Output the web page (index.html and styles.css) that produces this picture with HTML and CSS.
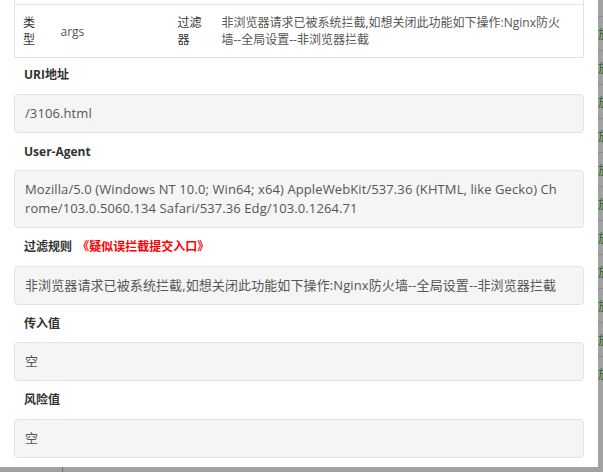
FILE: index.html
```html
<!DOCTYPE html>
<html lang="zh-CN">
<head>
<meta charset="utf-8">
<title>拦截详情</title>
<link rel="stylesheet" href="styles.css">
</head>
<body>
<div class="page">
  <table class="bg-table">
    <tr><td class="bg-main"></td><td class="bg-op">放行</td></tr>
    <tr><td class="bg-main"></td><td class="bg-op">放行</td></tr>
    <tr><td class="bg-main"></td><td class="bg-op">放行</td></tr>
    <tr><td class="bg-main"></td><td class="bg-op">放行</td></tr>
    <tr><td class="bg-main"></td><td class="bg-op">放行</td></tr>
    <tr><td class="bg-main"></td><td class="bg-op">放行</td></tr>
    <tr><td class="bg-main"></td><td class="bg-op">放行</td></tr>
    <tr><td class="bg-main"></td><td class="bg-op">放行</td></tr>
    <tr><td class="bg-main"></td><td class="bg-op">放行</td></tr>
    <tr><td class="bg-main"></td><td class="bg-op">放行</td></tr>
    <tr><td class="bg-main"></td><td class="bg-op">放行</td></tr>
  </table>
  <div class="bg-foot"><div class="bg-foot-cell"></div><div class="bg-foot-rest"></div></div>
</div>
<div class="overlay"></div>
<div class="modal">
  <div class="modal-body">
    <table class="detail-table">
      <colgroup><col class="c1"><col class="c2"><col class="c3"><col></colgroup>
      <tr class="prev-row"><td></td><td></td><td></td><td></td></tr>
      <tr>
        <th>类型</th>
        <td>args</td>
        <th>过滤器</th>
        <td>非浏览器请求已被系统拦截,如想关闭此功能如下操作:Nginx防火墙--全局设置--非浏览器拦截</td>
      </tr>
    </table>

    <div class="field-label first">URI地址</div>
    <div class="field-box">/3106.html</div>

    <div class="field-label">User-Agent</div>
    <div class="field-box">Mozilla/5.0 (Windows NT 10.0; Win64; x64) AppleWebKit/537.36 (KHTML, like Gecko) Chrome/103.0.5060.134 Safari/537.36 Edg/103.0.1264.71</div>

    <div class="field-label">过滤规则 <a class="report-link">《疑似误拦截提交入口》</a></div>
    <div class="field-box">非浏览器请求已被系统拦截,如想关闭此功能如下操作:Nginx防火墙--全局设置--非浏览器拦截</div>

    <div class="field-label">传入值</div>
    <div class="field-box">空</div>

    <div class="field-label">风险值</div>
    <div class="field-box">空</div>
  </div>
</div>
</body>
</html>
```
FILE: styles.css
```css
html, body {
  margin: 0;
  padding: 0;
}
body {
  width: 603px;
  height: 472px;
  overflow: hidden;
  background: #fff;
  font-family: "Open Sans", "Noto Sans CJK SC", sans-serif;
  color: #555;
}

/* background page */
.page {
  padding-top: 16px;
  width: 603px;
  height: 472px;
  overflow: hidden;
}
.bg-table {
  border-collapse: collapse;
  width: 603px;
  table-layout: fixed;
}
.bg-table td {
  height: 33px;
  border-top: 1px solid #ddd;
  padding: 0;
  font-size: 12px;
  overflow: hidden;
}
.bg-main {
  width: 598px;
}
.bg-op {
  color: #20a53a;
  white-space: nowrap;
}
.bg-foot {
  display: flex;
  margin-top: 76px;
  height: 40px;
}
.bg-foot-cell {
  width: 62px;
  border-right: 1px solid #bbb;
}
.bg-foot-rest {
  flex: 1;
}

.overlay {
  position: fixed;
  inset: 0;
  background: rgba(0, 0, 0, 0.37);
}

/* modal */
.modal {
  position: absolute;
  left: 0;
  top: 0;
  width: 598px;
  height: 467px;
  background: #fff;
  overflow: hidden;
}
.modal-body {
  padding: 0 14px;
}

.detail-table {
  width: 100%;
  table-layout: fixed;
  border-collapse: collapse;
  border: 1px solid #e4e4e4;
  margin-top: -31px;
  font-size: 12px;
  line-height: 17px;
  color: #555;
}
.detail-table col.c1 { width: 38px; }
.detail-table col.c2 { width: 117px; }
.detail-table col.c3 { width: 44px; }
.detail-table th,
.detail-table td {
  padding: 9px 8px;
  text-align: left;
  font-weight: normal;
  border-top: 1px solid #e4e4e4;
  vertical-align: middle;
}
.detail-table th {
  color: #333;
}
.prev-row td {
  height: 16px;
}

.field-label {
  padding: 10px 10px 9.5px;
  line-height: 18px;
  font-size: 12px;
  font-weight: bold;
  color: #333;
}
.field-label.first {
  padding-top: 8px;
}
.report-link {
  color: #f00;
  margin-left: 2px;
  cursor: pointer;
}

.field-box {
  background: #f5f5f5;
  border: 1px solid #e3e3e3;
  border-radius: 4px;
  padding: 9px 24px 9px 10px;
  line-height: 19px;
  font-size: 13px;
  letter-spacing: 0.1px;
  color: #555;
  word-break: break-all;
}
```
